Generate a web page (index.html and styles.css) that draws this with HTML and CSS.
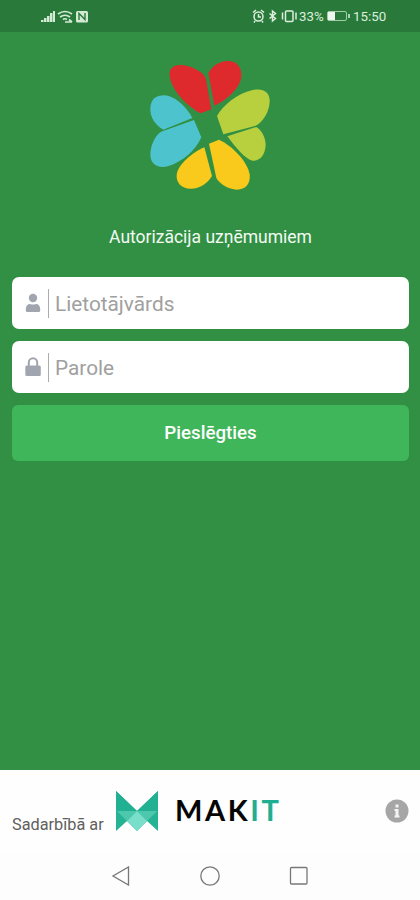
FILE: index.html
```
<!DOCTYPE html>
<html lang="lv">
<head>
  <meta charset="UTF-8">
  <title>Autorizācija uzņēmumiem</title>
  <meta name="viewport" content="width=device-width, initial-scale=1">
  <link rel="stylesheet" href="styles.css">
</head>
<body>
  <header class="status-bar">
    <svg class="status-left" width="50" height="16" viewBox="0 0 50 16">
      <path d="M1 14v-2h2.500v2zM4 14v-4h2.500v4zM7 14V8h2.500v6zM10 14V5h2.500v9zM13 14V3h2v11z" fill="#d3ead5"/>
      <g fill="none" stroke="#d3ead5" stroke-width="1.700">
        <path d="M18 6q7-5 14 0M20 9q5-3.500 10 0M23 11.500q2-1.500 4 0"/>
        <path d="M25 14h7M29 11.500l3 2.500"/>
      </g>
      <rect x="36" y="3" width="12" height="11.500" rx="1.500" fill="#d3ead5"/>
      <path d="M39 12V5.500l6 6V5" fill="none" stroke="#297a3a" stroke-width="1.400"/>
    </svg>
    <div class="status-right">
      <svg width="46" height="14" viewBox="0 0 46 14" fill="none" stroke="#dceedd" stroke-width="1.500">
        <circle cx="6.500" cy="7.500" r="4.500"/>
        <path d="M6.500 5v3h2.500M1 3.500l3-2.500M12 3.500L9 1M3 12l-1 1.500M10 12l1 1.500"/>
        <path d="M17.500 4.500l6 5L20.500 12V2l3 2.500-6 5"/>
        <rect x="33.500" y="2" width="7.500" height="10.500" rx="1"/>
        <path d="M30.500 3.500v7M44 3.500v7"/>
      </svg>
      <span class="percent">33%</span>
      <svg class="battery" width="23" height="10" viewBox="0 0 23 10">
        <rect x=".5" y=".5" width="19" height="9" rx="1.500" fill="none" stroke="#a5cba9"/>
        <path d="M1 1h7v8H1z" fill="#eef8ee"/>
        <path d="M22 3v4" stroke="#dceedd" stroke-width="1.500"/>
      </svg>
      <span class="time">15:50</span>
    </div>
  </header>

  <main class="login">
    <svg class="logo" width="140" height="150" viewBox="0 0 420 450">
      <g fill="#df2a2d">
        <path d="M182 190C150 175 95 125 89 78C86 54 102 43 126 45C160 48 197 71 198 88L214 178Z"/>
        <path d="M223 167L205 69C215 49 240 32 267 33C293 35 306 55 304 80C300 115 260 150 223 167Z"/>
      </g>
      <g fill="#b8cf3e">
        <path d="M250 253L231 198C250 165 290 131 338 120C370 113 391 126 389 156C387 190 365 221 345 228Z"/>
        <path d="M262 259L349 231C363 239 377 260 377 286C375 315 361 333 338 332C316 329 286 291 262 259Z"/>
      </g>
      <g fill="#f9c91b">
        <path d="M207 281L237 269C275 286 322 333 329 373C332 402 317 419 291 419C265 418 239 402 229 384Z"/>
        <path d="M193 292L216 378C203 399 182 416 151 416C124 415 108 398 110 374C115 342 157 308 193 292Z"/>
      </g>
      <g fill="#4dc3cd">
        <path d="M157 204L70 239C48 227 29 202 31 173C33 148 47 136 73 136C107 138 141 174 157 204Z"/>
        <path d="M162 210L184 262C166 302 129 335 84 349C53 357 30 342 31 313C32 283 48 252 67 244Z"/>
      </g>
    </svg>

    <h1 class="title">Autorizācija uzņēmumiem</h1>

    <form class="login-form">
      <label class="field">
        <svg width="16" height="20" viewBox="0 0 16 20" fill="#a1a5af">
          <circle cx="8" cy="5" r="4.200"/>
          <path d="M.8 17.500V16c0-3 1.700-5 4.200-5q3 1.200 6 0c2.500 0 4.200 2 4.200 5v1.500q0 1.500-1.500 1.500H2.300Q.8 19 .8 17.500z"/>
        </svg>
        <input type="text" placeholder="Lietotājvārds">
      </label>
      <label class="field">
        <svg width="16" height="20" viewBox="0 0 16 20">
          <path d="M3.800 10V5.500a4.200 4.200 0 0 1 8.400 0V10" fill="none" stroke="#a1a5af" stroke-width="2"/>
          <rect x=".3" y="8.500" width="15.500" height="10.500" rx="1.500" fill="#a1a5af"/>
        </svg>
        <input type="password" placeholder="Parole">
      </label>
      <button class="submit" type="button">Pieslēgties</button>
    </form>
  </main>

  <footer class="partner">
    <span class="partner-text">Sadarbībā ar</span>
    <svg class="makit-mark" width="42" height="40" viewBox="0 0 42 40">
      <path d="M0 0l21 20L42 0v40L31 30 21 40 11 30 0 40z" fill="#26b394"/>
      <path d="M0 0l21 20H0zM42 0L21 20h21z" fill="#22b092"/>
      <path d="M1 20h20L11 30zM41 20H21l10 10z" fill="#4ec8ac"/>
      <path d="M21 20l10 10-10 10-10-10z" fill="#79dfcb"/>
    </svg>
    <span class="makit">MAK<span>IT</span></span>
    <svg class="info" width="24" height="24" viewBox="0 0 24 24">
      <circle cx="12" cy="12" r="11.500" fill="#a6a6a6"/>
      <path d="M10.500 5.500h3v3h-3zM9.500 10h4v6.500h1v2h-5v-2h1V12h-1z" fill="#f4f4f4"/>
    </svg>
  </footer>

  <nav class="system-nav">
    <svg width="20" height="20" viewBox="0 0 20 20"><path d="M17.500 1v18L2 10z"/></svg>
    <svg width="20" height="20" viewBox="0 0 20 20"><circle cx="10" cy="10" r="9.200"/></svg>
    <svg width="20" height="20" viewBox="0 0 20 20"><rect x="1.500" y="1.500" width="16.500" height="16.500" rx="1"/></svg>
  </nav>
</body>
</html>
```
FILE: styles.css
```
* { box-sizing: border-box; }
body {
  display: flex;
  flex-direction: column;
  height: 900px;
  margin: 0;
  font-family: Roboto, sans-serif;
  background: #329044;
}
svg {
  display: block;
  flex: none;
}
.status-bar {
  display: flex;
  justify-content: space-between;
  align-items: center;
  height: 32px;
  padding: 0 34px 0 40px;
  background: #297a3a;
  color: #dceedd;
}
.status-right {
  display: flex;
  align-items: center;
  font-size: 13.3px;
}
.percent {
  width: 26px;
  margin-left: 1px;
}
.battery {
  margin: 0 3px 0 2px;
}
.time {
  width: 33px;
  white-space: nowrap;
}
.login {
  display: flex;
  flex: 1;
  flex-direction: column;
  align-items: center;
  padding: 18px 11px 0 12px;
}
.logo {
  margin-right: 2px;
}
.title {
  margin: 25px 0 28px;
  font-size: 17.5px;
  line-height: 24px;
  font-weight: 400;
  color: #f3faf3;
}
.login-form {
  display: flex;
  flex-direction: column;
  gap: 12px;
  width: 100%;
}
.field {
  display: flex;
  align-items: center;
  height: 52px;
  padding-left: 13px;
  border-radius: 7px;
  background: #fff;
}
.field input {
  flex: 1;
  height: 29px;
  margin-left: 7px;
  padding: 2px 6px 0;
  border: 0;
  border-left: 1px solid #a9acb3;
  background: none;
  font: 20.8px Roboto, sans-serif;
}
.field input::placeholder {
  color: #a0a0a0;
}
.submit {
  height: 56px;
  border: 0;
  border-radius: 6px;
  background: #40b65a;
  color: #fff;
  font: 500 18.7px Roboto, sans-serif;
}
.partner {
  display: flex;
  align-items: center;
  height: 82px;
  padding: 0 11px 0 12px;
  background: #fefefe;
}
.partner-text {
  width: 104px;
  margin-top: 26px;
  font-size: 16.3px;
  color: #606060;
}
.makit {
  margin: -2px 0 0 17px;
  font: 700 29px/40px Lato, sans-serif;
  letter-spacing: 2.6px;
  color: #050505;
}
.makit span {
  color: #1fae91;
}
.info {
  margin-left: auto;
}
.system-nav {
  display: flex;
  justify-content: center;
  align-items: center;
  gap: 69px;
  height: 48px;
  background: #fdfdfd;
  fill: none;
  stroke: #777;
  stroke-width: 1.3;
}
```
